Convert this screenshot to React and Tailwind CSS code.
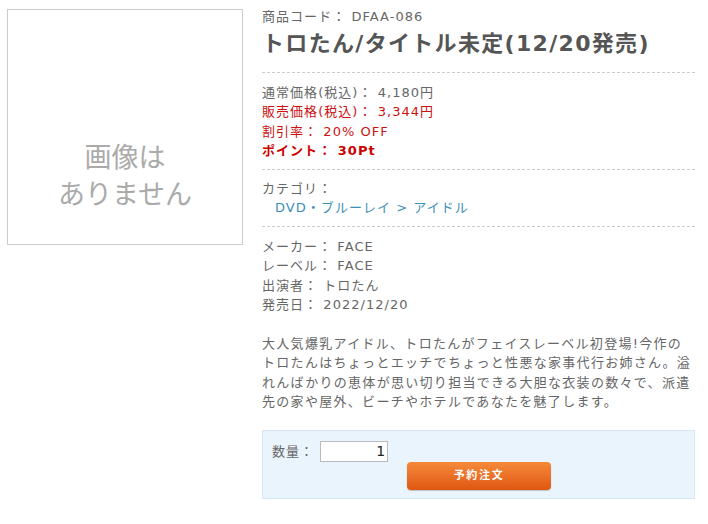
export default function App() {
  const font = { fontFamily: '"DejaVu Sans", "Noto Sans CJK JP", sans-serif' };
  return (
    <div className="w-[708px] h-[524px] bg-white text-[#666] text-[13px] leading-[19.5px] tracking-[0.08em]" style={font}>
      <div className="flex pt-[9px] pl-[7px]">
        <div className="w-[236px] h-[236px] shrink-0 border border-[#ccc] flex flex-col items-center justify-end pb-[31px] text-[#aaa] text-[27px] leading-[37px] tracking-normal">
          <div>画像は</div>
          <div>ありません</div>
        </div>

        <div className="ml-[19px] w-[433px]">
          <div className="mt-[-2px]">商品コード： DFAA-086</div>
          <div className="text-[22px] leading-[32px] font-bold text-[#555] mt-[1px] tracking-[0.06em]">トロたん/タイトル未定(12/20発売)</div>

          <div className="border-t border-dashed border-[#ccc] mt-[12px] pt-[10px] pb-[8px]">
            <div>通常価格(税込)： 4,180円</div>
            <div className="text-[#cc1111]">販売価格(税込)： 3,344円</div>
            <div className="text-[#cc1111]">割引率： 20% OFF</div>
            <div className="text-[#cc0000] font-bold">ポイント： 30Pt</div>
          </div>

          <div className="border-t border-dashed border-[#ccc] pt-[9px] pb-[8px]">
            <div>カテゴリ：</div>
            <div className="pl-[13px] text-[#3d8fb5]">DVD・ブルーレイ &gt; アイドル</div>
          </div>

          <div className="border-t border-dashed border-[#ccc] pt-[10px]">
            <div>メーカー： FACE</div>
            <div>レーベル： FACE</div>
            <div>出演者： トロたん</div>
            <div>発売日： 2022/12/20</div>
          </div>

          <div className="mt-[19px] leading-[19.6px] tracking-[0.1em]">
            大人気爆乳アイドル、トロたんがフェイスレーベル初登場!今作のトロたんはちょっとエッチでちょっと性悪な家事代行お姉さん。溢れんばかりの恵体が思い切り担当できる大胆な衣装の数々で、派遣先の家や屋外、ビーチやホテルであなたを魅了します。
          </div>

          <div className="mt-[18px] h-[69px] bg-[#eaf4fd] border border-[#d6e7f3] pl-[9px] pt-[10px]">
            <div className="flex items-center">
              <span>数量：</span>
              <input
                readOnly
                value="1"
                className="ml-[6px] w-[68px] h-[21px] bg-white border border-[#bbb] text-right pr-[2px] text-[14px] text-[#222] tracking-normal outline-none"
              />
            </div>
            <div className="flex">
              <button className="ml-[135px] w-[144px] h-[28px] rounded-[4px] bg-gradient-to-b from-[#f58a3a] to-[#e0560f] text-white text-[11px] font-bold tracking-[0.15em] shadow-[0_1px_1px_rgba(0,0,0,0.2)]">
                予約注文
              </button>
            </div>
          </div>
        </div>
      </div>
    </div>
  );
}
